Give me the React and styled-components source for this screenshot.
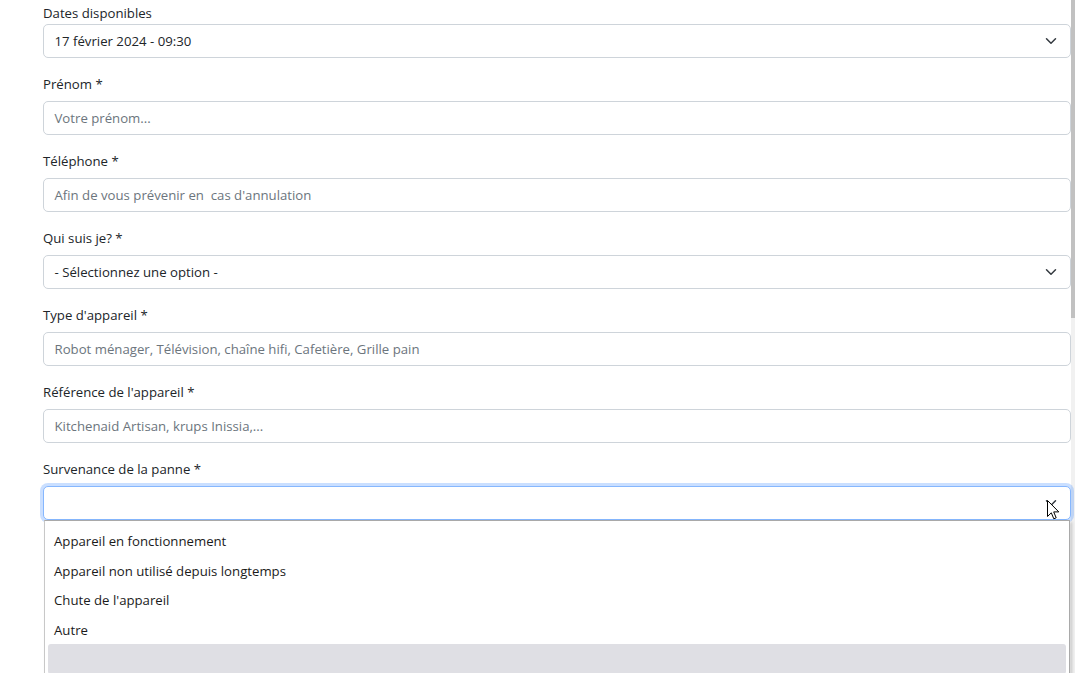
import React from 'react'
import styled, { createGlobalStyle } from 'styled-components'

const GlobalStyle = createGlobalStyle`
  html, body {
    margin: 0;
    padding: 0;
    height: 673px;
    overflow: hidden;
    background: #fff;
  }
  body {
    font-family: "Open Sans", "Noto Sans", "Liberation Sans", sans-serif;
    font-size: 13.2px;
    color: #212529;
  }
`

const Page = styled.div`
  display: flex;
  width: 1075px;
  height: 673px;
`

const Main = styled.main`
  flex: 1;
  padding: 2px 0 0 43px;
`

const Scrollbar = styled.div`
  width: 4px;
  background: #f1f1f1;
  display: flex;
  flex-direction: column;
`

const Thumb = styled.div`
  height: 318px;
  background: #c1c1c1;
`

const Group = styled.div`
  position: relative;
  margin-bottom: 14px;
`

const Label = styled.label`
  display: block;
  font-size: 13.2px;
  line-height: ${p => (p.$tight ? '22px' : '24px')};
  margin-bottom: ${p => (p.$tight ? '0' : '5px')};
  color: #212529;
`

const Field = styled.div`
  box-sizing: border-box;
  height: 34px;
  display: flex;
  align-items: center;
  justify-content: space-between;
  padding: 0 13px 0 10.5px;
  border: 1px solid ${p => (p.$focus ? '#86b7fe' : '#ced4da')};
  border-radius: 5px;
  background: #fff;
  font-size: 13.2px;
  color: ${p => (p.$placeholder ? '#6c757d' : '#212529')};
  box-shadow: ${p => (p.$focus ? '0 0 0 3px rgba(13, 110, 253, 0.22)' : 'none')};
`

const Chevron = styled.svg`
  width: 12px;
  height: 12px;
  flex: none;
`

const Popup = styled.ul`
  position: absolute;
  left: 1px;
  right: 1px;
  top: 63px;
  margin: 0;
  padding: 5px 3px 0;
  list-style: none;
  background: #fff;
  border: 1px solid #a9a9a9;
  border-left-color: #c8c8c8;
  box-shadow: 2px 2px 3px rgba(0, 0, 0, 0.18);
  height: 170px;
  box-sizing: border-box;
  z-index: 2;
`

const Option = styled.li`
  height: 29.6px;
  box-sizing: border-box;
  padding: 2px 0 0 6px;
  line-height: 27.6px;
  font-size: 13.2px;
  color: #1b1b1b;
  border-radius: 3px;
  background: ${p => (p.$active ? '#dfdfe4' : 'transparent')};
`

const Cursor = styled.svg`
  position: absolute;
  right: 11px;
  top: 43px;
  width: 13px;
  height: 20px;
  z-index: 3;
`

const ChevronIcon = () => (
  <Chevron viewBox="0 0 16 16">
    <path d="M2 5l6 6 6-6" fill="none" stroke="#343a40" strokeWidth="2" strokeLinecap="round" strokeLinejoin="round" />
  </Chevron>
)

const fields = [
  { label: 'Prénom *', text: 'Votre prénom...', placeholder: true },
  { label: 'Téléphone *', text: "Afin de vous prévenir en\u00a0 cas d'annulation", placeholder: true },
  { label: 'Qui suis je? *', text: '- Sélectionnez une option -', select: true },
  { label: "Type d'appareil *", text: 'Robot ménager, Télévision, chaîne hifi, Cafetière, Grille pain', placeholder: true },
  { label: "Référence de l'appareil *", text: 'Kitchenaid Artisan, krups Inissia,...', placeholder: true },
]

const options = [
  'Appareil en fonctionnement',
  'Appareil non utilisé depuis longtemps',
  "Chute de l'appareil",
  'Autre',
  '',
]

export default function App() {
  return (
    <>
      <GlobalStyle />
      <Page>
        <Main>
          <Group>
            <Label $tight>Dates disponibles</Label>
            <Field>
              <span>17 février 2024 - 09:30</span>
              <ChevronIcon />
            </Field>
          </Group>

          {fields.map(f => (
            <Group key={f.label}>
              <Label>{f.label}</Label>
              <Field $placeholder={f.placeholder}>
                <span>{f.text}</span>
                {f.select && <ChevronIcon />}
              </Field>
            </Group>
          ))}

          <Group>
            <Label>Survenance de la panne *</Label>
            <Field $focus>
              <span />
              <ChevronIcon />
            </Field>
            <Cursor viewBox="0 0 13 20">
              <path d="M0.5 0.5 L0.5 16.5 L4.3 12.8 L6.8 18.8 L9.2 17.8 L6.7 11.9 L11.8 11.9 Z" fill="#fff" stroke="#000" strokeWidth="1" strokeLinejoin="miter" />
            </Cursor>
            <Popup>
              {options.map((o, i) => (
                <Option key={i} $active={i === options.length - 1}>{o}</Option>
              ))}
            </Popup>
          </Group>
        </Main>
        <Scrollbar>
          <Thumb />
        </Scrollbar>
      </Page>
    </>
  )
}
